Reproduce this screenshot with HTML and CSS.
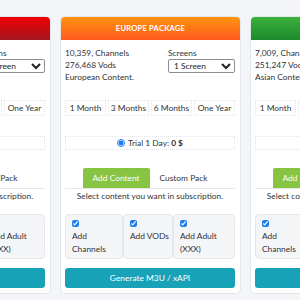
FILE: index.html
```html
<!DOCTYPE html>
<html lang="en">

<head>
    <meta charset="UTF-8">
    <meta name="viewport" content="width=device-width, initial-scale=1.0">
    <title>IPTV Packages</title>
    <link rel="stylesheet" href="styles.css">
</head>

<body>

    <!-- Package slider -->
    <div class="slider">

        <!-- America -->
        <div class="package">
            <div class="package-head head-red">America Package</div>
            <div class="package-body">
                <div class="info-row">
                    <div class="info">
                        <div>18,204, Channels</div>
                        <div>198,530 Vods</div>
                        <div>American Content.</div>
                    </div>
                    <div class="screens">
                        <label>Screens</label>
                        <select>
                            <option>1 Screen</option>
                            <option>2 Screens</option>
                        </select>
                    </div>
                </div>
                <div class="durations">
                    <div class="duration">1 Month</div>
                    <div class="duration">3 Months</div>
                    <div class="duration">6 Months</div>
                    <div class="duration">One Year</div>
                </div>
                <div class="trial">
                    <input type="radio" checked> Trial 1 Day: <b>0 $</b>
                </div>
                <div class="tabs">
                    <a class="tab active">Add Content</a>
                    <a class="tab">Custom Pack</a>
                </div>
                <p class="hint">Select content you want in subscription.</p>
                <div class="addons">
                    <label class="addon"><input type="checkbox" checked><span>Add Channels</span></label>
                    <label class="addon"><input type="checkbox" checked><span>Add VODs</span></label>
                    <label class="addon"><input type="checkbox" checked><span>Add Adult (XXX)</span></label>
                </div>
                <button class="generate-btn">Generate M3U / xAPI</button>
            </div>
        </div>

        <!-- Europe -->
        <div class="package">
            <div class="package-head head-orange">Europe Package</div>
            <div class="package-body">
                <div class="info-row">
                    <div class="info">
                        <div>10,359, Channels</div>
                        <div>276,468 Vods</div>
                        <div>European Content.</div>
                    </div>
                    <div class="screens">
                        <label>Screens</label>
                        <select>
                            <option>1 Screen</option>
                            <option>2 Screens</option>
                        </select>
                    </div>
                </div>
                <div class="durations">
                    <div class="duration">1 Month</div>
                    <div class="duration">3 Months</div>
                    <div class="duration">6 Months</div>
                    <div class="duration">One Year</div>
                </div>
                <div class="trial">
                    <input type="radio" checked> Trial 1 Day: <b>0 $</b>
                </div>
                <div class="tabs">
                    <a class="tab active">Add Content</a>
                    <a class="tab">Custom Pack</a>
                </div>
                <p class="hint">Select content you want in subscription.</p>
                <div class="addons">
                    <label class="addon"><input type="checkbox" checked><span>Add Channels</span></label>
                    <label class="addon"><input type="checkbox" checked><span>Add VODs</span></label>
                    <label class="addon"><input type="checkbox" checked><span>Add Adult (XXX)</span></label>
                </div>
                <button class="generate-btn">Generate M3U / xAPI</button>
            </div>
        </div>

        <!-- Asia -->
        <div class="package">
            <div class="package-head head-green">Asia Package</div>
            <div class="package-body">
                <div class="info-row">
                    <div class="info">
                        <div>7,009, Channels</div>
                        <div>251,247 Vods</div>
                        <div>Asian Content.</div>
                    </div>
                    <div class="screens">
                        <label>Screens</label>
                        <select>
                            <option>1 Screen</option>
                            <option>2 Screens</option>
                        </select>
                    </div>
                </div>
                <div class="durations">
                    <div class="duration">1 Month</div>
                    <div class="duration">3 Months</div>
                    <div class="duration">6 Months</div>
                    <div class="duration">One Year</div>
                </div>
                <div class="trial">
                    <input type="radio" checked> Trial 1 Day: <b>0 $</b>
                </div>
                <div class="tabs">
                    <a class="tab active">Add Content</a>
                    <a class="tab">Custom Pack</a>
                </div>
                <p class="hint">Select content you want in subscription.</p>
                <div class="addons">
                    <label class="addon"><input type="checkbox" checked><span>Add Channels</span></label>
                    <label class="addon"><input type="checkbox" checked><span>Add VODs</span></label>
                    <label class="addon"><input type="checkbox" checked><span>Add Adult (XXX)</span></label>
                </div>
                <button class="generate-btn">Generate M3U / xAPI</button>
            </div>
        </div>

    </div>

</body>

</html>
```

FILE: styles.css
```css
/* Global styles */
body {
    font-family: 'Lato', sans-serif;
    font-size: 8.4px;
    background-color: #f3f5f8;
    color: #2f3337;
    margin: 0;
    padding: 0;
    overflow: hidden;
}

/* Slider */
.slider {
    display: flex;
    gap: 9px;
    margin-left: -130px;
    padding-top: 16px;
}

.package {
    flex: none;
    width: 181px;
    background-color: #fff;
    border: 1px solid #e3e6ea;
    border-radius: 5px;
    overflow: hidden;
    box-sizing: border-box;
}

.package-head {
    height: 23px;
    line-height: 23px;
    text-align: center;
    color: #fff;
    font-size: 7.6px;
    font-weight: bold;
    text-transform: uppercase;
    letter-spacing: 0.2px;
}

.head-red {
    background: linear-gradient(#f00000, #a3161f);
}

.head-orange {
    background: linear-gradient(#ff9410, #ff5a1e);
}

.head-green {
    background: linear-gradient(#3cb03c, #1d8a2c);
}

.package-body {
    padding: 7px 5px 5px 4px;
}

/* Info + screens */
.info-row {
    display: grid;
    grid-template-columns: 1fr 67px;
    gap: 4px;
    line-height: 12px;
}

.screens label {
    display: block;
}

.screens select {
    display: block;
    width: 100%;
    height: 14px;
    font-family: 'Lato', sans-serif;
    font-size: 8.4px;
    border: 1px solid #8a8f94;
    border-radius: 2px;
    padding: 0 1px;
    background: #fff;
    color: #222;
}

/* Durations */
.durations {
    display: grid;
    grid-template-columns: repeat(4, 1fr);
    gap: 2px;
    margin-top: 17px;
}

.duration {
    height: 16px;
    line-height: 15px;
    text-align: center;
    border: 1px dotted #e2e4e7;
    box-sizing: border-box;
}

.trial {
    margin-top: 20px;
    height: 14px;
    line-height: 13px;
    text-align: center;
    border: 1px dotted #e2e4e7;
    box-sizing: border-box;
}

.trial input {
    width: 8px;
    height: 8px;
    margin: 0 1px 0 0;
    vertical-align: -1px;
    accent-color: #1a7fe8;
}

/* Tabs */
.tabs {
    display: flex;
    justify-content: center;
    margin-top: 18px;
    border-bottom: 1px solid #e6e8eb;
}

.tab {
    padding: 0 10px;
    line-height: 20px;
    color: #2f3337;
}

.tab.active {
    background-color: #86c442;
    color: #fff;
    border-radius: 2px 2px 0 0;
}

.hint {
    margin: 1px 0 0;
    line-height: 12px;
    text-align: center;
}

/* Addons */
.addons {
    display: grid;
    grid-template-columns: 58px 50px 1fr;
    margin-top: 12px;
}

.addon {
    display: block;
    height: 45px;
    padding: 5px 1px 0 6px;
    background-color: #f4f5f7;
    border: 1px solid #e5e7ea;
    border-radius: 4px;
    box-sizing: border-box;
    line-height: 12.5px;
}

.addon input {
    display: block;
    width: 7px;
    height: 7px;
    margin: 0 0 3px 0;
    accent-color: #1a7fe8;
}

/* Button */
.generate-btn {
    display: block;
    width: 100%;
    height: 20px;
    margin-top: 9px;
    background-color: #17a2b8;
    color: #fff;
    border: none;
    border-radius: 3px;
    font-family: 'Lato', sans-serif;
    font-size: 8.4px;
    cursor: pointer;
}
```
